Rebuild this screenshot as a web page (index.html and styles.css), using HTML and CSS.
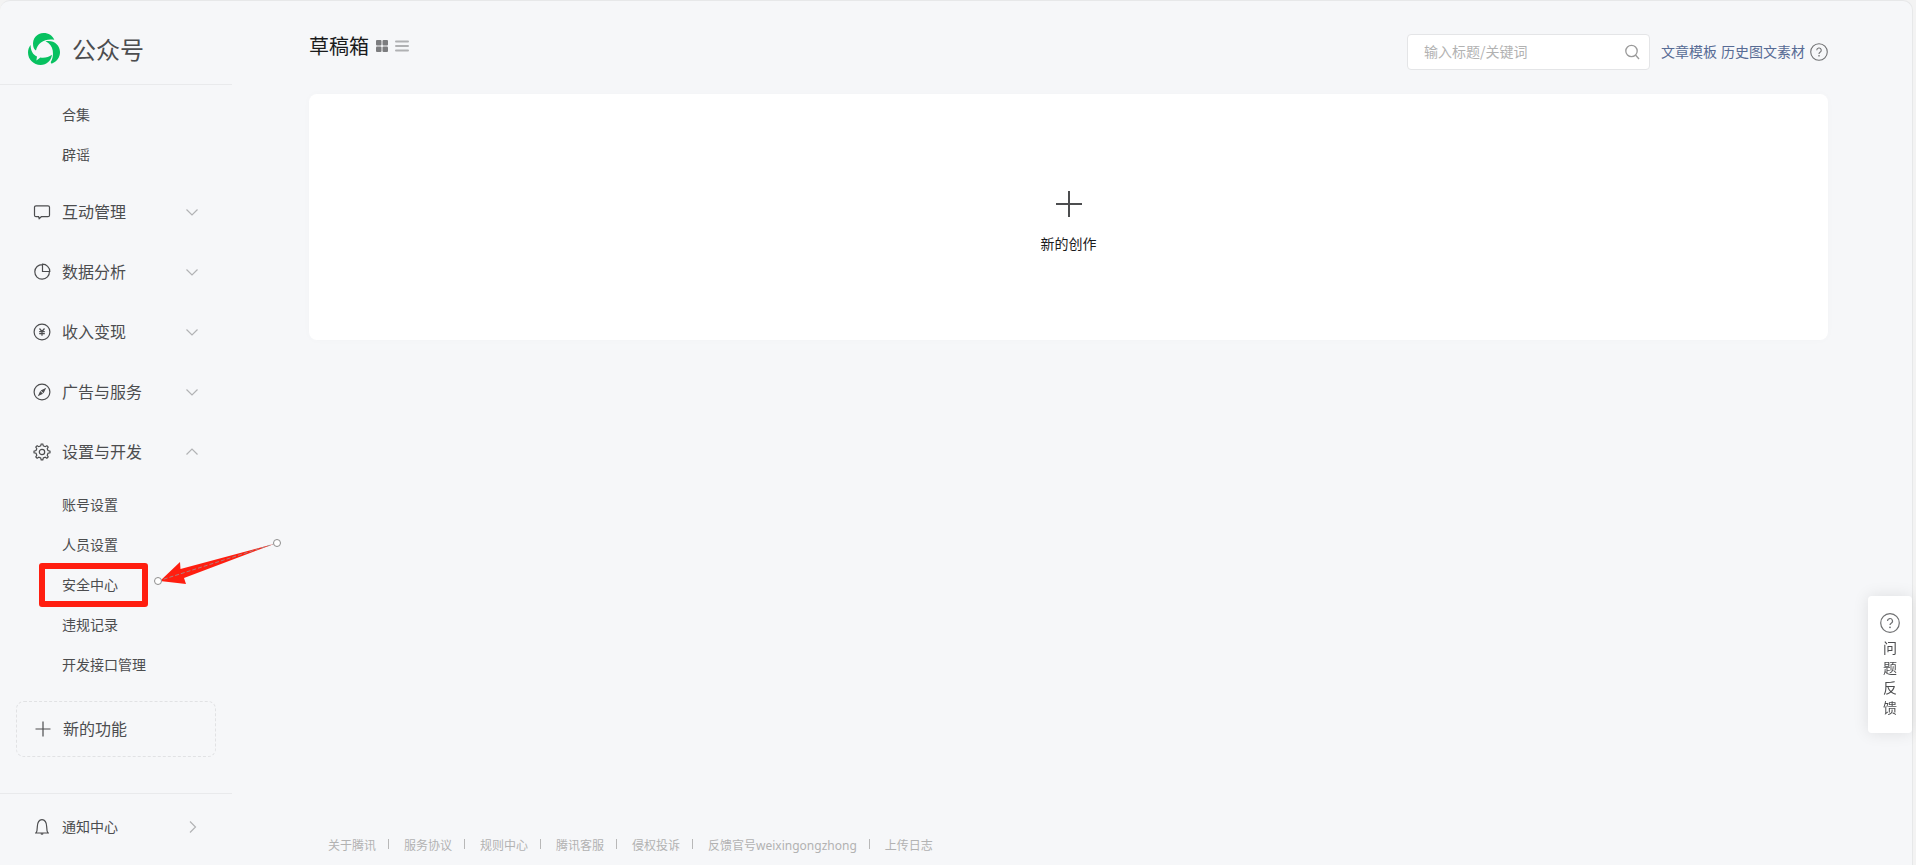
FILE: index.html
```
<!DOCTYPE html>
<html lang="zh-CN">
<head>
  <meta charset="UTF-8">
  <meta name="viewport" content="width=device-width, initial-scale=1.0">
  <title>公众号</title>
  <link rel="stylesheet" href="styles.css">
</head>
<body>
  <div class="frame">
    <aside class="sidebar">
      <a class="brand" href="#">
        <svg class="logo" viewBox="0 0 32 32" fill="#07c160">
          <path d="M5.200 13C4 5.500 9 0 15.600 0c5 0 8.900 2.500 10.700 6.800C17.500 5 9.500 9.500 8 17.500 6.500 16.500 5.600 15 5.200 13z"/>
          <path d="M17.500 8.300C25.500 6.600 32 12 32 19c0 5.200-3 9.600-8.400 11.800l-.9-1.600c3.800-5.800 3.500-17.400-5.200-20.900z"/>
          <path d="M2.600 12C2.600 18 5 21.800 9 23.600L8.400 27.500 12.400 24.600C16.400 25.200 20.800 24.400 24 21.800 23.400 27.600 18.600 32 12.600 32 5.600 32 0 26.600 0 19.600 0 16.600.9 14.200 2.600 12z"/>
        </svg>
        <span class="brand-name">公众号</span>
      </a>

      <nav class="menu">
        <ul class="sub-menu">
          <li><a href="#">合集</a></li>
          <li><a href="#">辟谣</a></li>
        </ul>
        <button class="menu-title" type="button">
          <svg class="icon" viewBox="0 0 18 18"><path d="M3 2.800h12a1.500 1.500 0 0 1 1.500 1.500v7.900a1.500 1.500 0 0 1-1.500 1.500H8.300L6.200 15.600 5.600 13.700H3a1.500 1.500 0 0 1-1.500-1.500V4.300A1.500 1.500 0 0 1 3 2.800z"/></svg>
          <span>互动管理</span>
          <svg class="arrow" viewBox="0 0 14 14"><path d="M1.500 4.500 7 10l5.500-5.500"/></svg>
        </button>
        <button class="menu-title" type="button">
          <svg class="icon" viewBox="0 0 18 18"><path d="M9.500 1.600A7.300 7.300 0 1 0 16.400 8.500M9.500 1.200v7.300h7.300A7.300 7.300 0 0 0 9.500 1.200z"/></svg>
          <span>数据分析</span>
          <svg class="arrow" viewBox="0 0 14 14"><path d="M1.500 4.500 7 10l5.500-5.500"/></svg>
        </button>
        <button class="menu-title" type="button">
          <svg class="icon" viewBox="0 0 18 18"><circle cx="9" cy="9" r="7.900"/><path d="M6.500 5.500 9 8.500l2.500-3M6.200 8.700h5.600M6.200 10.700h5.600M9 8.500v4.300"/></svg>
          <span>收入变现</span>
          <svg class="arrow" viewBox="0 0 14 14"><path d="M1.500 4.500 7 10l5.500-5.500"/></svg>
        </button>
        <button class="menu-title" type="button">
          <svg class="icon" viewBox="0 0 18 18"><circle cx="9" cy="9" r="7.900"/><path class="solid" d="M13.200 4.800 10.600 10.300 7.700 7.400zM4.800 13.200l2.400-5.200L10 10.800z"/></svg>
          <span>广告与服务</span>
          <svg class="arrow" viewBox="0 0 14 14"><path d="M1.500 4.500 7 10l5.500-5.500"/></svg>
        </button>
        <button class="menu-title" type="button" aria-expanded="true">
          <svg class="icon" viewBox="0 0 18 18"><circle cx="9" cy="9" r="2.700"/><path d="M7.700 2.900 8.200 1h1.600l.5 1.900 1.900.8 1.700-1 1.300 1.300-1 1.700.8 1.900 2 .5v1.600l-2 .6-.8 1.900 1 1.700-1.300 1.300-1.700-1-1.900.8-.5 1.900H8.200l-.5-1.900-1.900-.8-1.700 1-1.300-1.300 1-1.700-.8-1.900-2-.6V8.100l2-.5.8-1.900-1-1.700 1.300-1.300 1.700 1z"/></svg>
          <span>设置与开发</span>
          <svg class="arrow" viewBox="0 0 14 14"><path d="M1.500 9.500 7 4l5.500 5.500"/></svg>
        </button>
        <ul class="sub-menu">
          <li><a href="#">账号设置</a></li>
          <li><a href="#">人员设置</a></li>
          <li class="marked">
            <a href="#">安全中心</a>
            <span class="mark-box"></span>
            <svg class="mark-arrow" viewBox="0 0 136 60">
              <path fill="#ff1e10" d="M10 46 30 27 30.500 34 124 9 34 43 36 49z"/>
              <path stroke="#999" stroke-opacity=".8" stroke-dasharray="4 2" d="M8 46 127 8"/>
              <circle cx="8" cy="46" r="3.500" fill="#fff" stroke="#8e8e8e"/>
              <circle cx="127" cy="8" r="3.500" fill="#fff" stroke="#8e8e8e"/>
            </svg>
          </li>
          <li><a href="#">违规记录</a></li>
          <li><a href="#">开发接口管理</a></li>
        </ul>
        <button class="new-feature" type="button">
          <svg class="icon" viewBox="0 0 18 18"><path d="M9 1.500v15M1.500 9h15"/></svg>
          <span>新的功能</span>
        </button>
      </nav>

      <a class="notice" href="#">
        <svg class="icon" viewBox="0 0 18 18"><path d="M2 15h14M3.200 14.700c1-1.400 1-3.200 1.100-6C4.500 4.600 6.200 1.600 9 1.600s4.500 3 4.700 7.100c.1 2.800.1 4.600 1.100 6"/><path class="solid" d="M7.500 15.200h3a1.500 1.500 0 0 1-3 0z"/></svg>
        <span>通知中心</span>
        <svg class="arrow" viewBox="0 0 14 14"><path d="M5 1.500 10.500 7 5 12.500"/></svg>
      </a>
    </aside>

    <main class="main">
      <header class="topbar">
        <h1>草稿箱</h1>
        <button class="view-btn" type="button" aria-label="卡片">
          <svg width="12" height="12" viewBox="0 0 12 12" fill="#7c7d7f"><rect width="5.500" height="5.500" rx="1"/><rect x="6.500" width="5.500" height="5.500" rx="1"/><rect y="6.500" width="5.500" height="5.500" rx="1"/><rect x="6.500" y="6.500" width="5.500" height="5.500" rx="1"/></svg>
        </button>
        <button class="view-btn" type="button" aria-label="列表">
          <svg width="14" height="12" viewBox="0 0 14 12" stroke="#b0b1b3" stroke-width="2" stroke-linecap="round"><path d="M1 1.500h12M1 6h12M1 10.500h12"/></svg>
        </button>
        <form class="search">
          <input type="text" placeholder="输入标题/关键词" aria-label="搜索">
          <button type="submit" aria-label="搜索">
            <svg width="16" height="16" viewBox="0 0 16 16" fill="none" stroke="#9a9a9a" stroke-width="1.300"><circle cx="7.500" cy="7" r="5.700"/><path d="m11.500 11 3.500 4"/></svg>
          </button>
        </form>
        <div class="links">
          <a href="#">文章模板</a>
          <a href="#">历史图文素材</a>
        </div>
        <a class="help" href="#" aria-label="帮助">
          <svg width="18" height="18" viewBox="0 0 20 20"><circle cx="10" cy="10" r="9.200"/><path d="M7.500 8a2.500 2.500 0 1 1 3.700 2.200c-.8.500-1.200.9-1.200 1.900"/><circle class="dot" cx="10" cy="14.300" r=".9"/></svg>
        </a>
      </header>

      <section class="card">
        <a class="create" href="#">
          <svg width="26" height="26" viewBox="0 0 26 26" stroke="#4c4d4f" stroke-width="2"><path d="M13 0v26M0 13h26"/></svg>
          <span>新的创作</span>
        </a>
      </section>

      <footer class="footer">
        <a href="#">关于腾讯</a>
        <a href="#">服务协议</a>
        <a href="#">规则中心</a>
        <a href="#">腾讯客服</a>
        <a href="#">侵权投诉</a>
        <a href="#">反馈官号weixingongzhong</a>
        <a href="#">上传日志</a>
      </footer>
    </main>
  </div>

  <a class="feedback" href="#">
    <svg width="20" height="20" viewBox="0 0 20 20"><circle cx="10" cy="10" r="9.300"/><path d="M7.500 8a2.500 2.500 0 1 1 3.700 2.200c-.8.500-1.200.9-1.200 1.900"/><circle class="dot" cx="10" cy="14.300" r=".9"/></svg>
    <span>问题反馈</span>
  </a>
</body>
</html>
```
FILE: styles.css
```
* {
  box-sizing: border-box;
}
body {
  margin: 0;
  background: #f3f3f3;
  font-family: "Noto Sans CJK SC", sans-serif;
  font-size: 14px;
  color: #4c4d4f;
}
a {
  color: inherit;
  text-decoration: none;
}
button {
  padding: 0;
  border: none;
  background: none;
  font: inherit;
  color: inherit;
  cursor: pointer;
}
svg {
  display: block;
  flex: none;
}
ul {
  margin: 0;
  padding: 0;
  list-style: none;
}
.frame {
  display: flex;
  min-height: 100vh;
  margin-right: 3px;
  background: #f6f7f9;
  border: 1px solid #e7e8e9;
  border-width: 1px 1px 0 0;
  border-radius: 10px 10px 0 0;
}

/* sidebar */
.sidebar {
  display: flex;
  flex-direction: column;
  flex: none;
  width: 232px;
}
.brand {
  display: flex;
  align-items: center;
  gap: 12px;
  padding: 32px 28px 19px;
  border-bottom: 1px solid #e9eaec;
}
.logo {
  width: 32px;
  height: 32px;
}
.brand-name {
  font-size: 24px;
  line-height: 32px;
}
.menu {
  flex: 1;
  padding-top: 7px;
}
.sub-menu {
  padding: 2px 0 8px;
}
.sub-menu a {
  display: block;
  padding-left: 62px;
  line-height: 40px;
}
.menu-title,
.notice {
  display: flex;
  align-items: center;
  gap: 11px;
  width: 100%;
  padding: 0 33px;
}
.menu-title {
  height: 60px;
  font-size: 16px;
}
.menu span,
.notice span {
  padding-bottom: 2px;
}
.icon {
  width: 18px;
  height: 18px;
  fill: none;
  stroke: #4c4d4f;
  stroke-width: 1.2;
}
.icon .solid {
  fill: #4c4d4f;
  stroke: none;
}
.arrow {
  width: 14px;
  height: 14px;
  margin-left: auto;
  fill: none;
  stroke: #b2b3b5;
  stroke-width: 1.2;
}
.new-feature {
  display: flex;
  align-items: center;
  gap: 11px;
  width: 200px;
  height: 56px;
  margin: 9px 16px 0;
  padding-left: 17px;
  border: 1px dashed #e1e2e4;
  border-radius: 8px;
  font-size: 16px;
}
.notice {
  height: 72px;
  padding-bottom: 5px;
  border-top: 1px solid #e9eaec;
}

/* highlighted item */
.marked {
  position: relative;
}
.mark-box {
  position: absolute;
  top: -1px;
  left: 39px;
  width: 109px;
  height: 44px;
  border: 6px solid #ff1e10;
  border-radius: 3px;
  pointer-events: none;
}
.mark-arrow {
  position: absolute;
  top: -29px;
  left: 150px;
  width: 136px;
  height: 60px;
  fill: none;
  pointer-events: none;
}

/* main */
.main {
  display: flex;
  flex-direction: column;
  flex: 1;
  padding: 33px 84px 0 77px;
}
.topbar {
  display: flex;
  align-items: flex-start;
  margin-bottom: 24px;
}
h1 {
  margin: 0;
  font-size: 20px;
  font-weight: 400;
  line-height: 24px;
  color: #1a1b1c;
}
.view-btn {
  display: flex;
  align-items: center;
  height: 24px;
  margin-left: 7px;
}
.search {
  display: flex;
  align-items: center;
  width: 243px;
  height: 36px;
  margin-left: auto;
  padding: 0 9px 0 16px;
  background: #fff;
  border: 1px solid #e4e5e7;
  border-radius: 4px;
}
.search input {
  flex: 1;
  min-width: 0;
  padding: 0 0 2px;
  border: none;
  outline: none;
  background: none;
  font: inherit;
}
.search input::placeholder {
  color: #b2b2b2;
}
.links {
  display: flex;
  gap: 4px;
  margin-left: 11px;
  line-height: 34px;
  color: #576b95;
}
.help {
  display: flex;
  align-items: center;
  height: 36px;
  margin-left: 5px;
}
.help svg,
.feedback svg {
  fill: none;
  stroke: #6f7072;
  stroke-width: 1.2;
}
.help .dot,
.feedback .dot {
  fill: #6f7072;
  stroke: none;
}
.card {
  display: flex;
  justify-content: center;
  padding: 97px 0 87px;
  background: #fff;
  border-radius: 8px;
  box-shadow: 0 0 8px rgba(0, 0, 0, 0.02);
}
.create {
  display: flex;
  flex-direction: column;
  align-items: center;
  gap: 16px;
  line-height: 20px;
  color: #1a1b1c;
}
.footer {
  display: flex;
  margin-top: auto;
  padding: 0 0 9px 19px;
  font-family: "Noto Sans", "Noto Sans CJK SC", sans-serif;
  font-size: 12px;
  line-height: 20px;
  color: #b2b2b2;
}
.footer a {
  display: flex;
}
.footer a + a::before {
  content: "";
  width: 1px;
  height: 10px;
  margin: 3px 15px 0 12px;
  background: #b8b8b8;
}

/* floating feedback entry */
.feedback {
  position: fixed;
  right: 4px;
  bottom: 132px;
  display: flex;
  flex-direction: column;
  align-items: center;
  gap: 4px;
  width: 44px;
  padding: 17px 15px 16px;
  background: #fff;
  border-radius: 4px;
  box-shadow: 0 0 16px rgba(0, 0, 0, 0.1);
  line-height: 20px;
}
```
